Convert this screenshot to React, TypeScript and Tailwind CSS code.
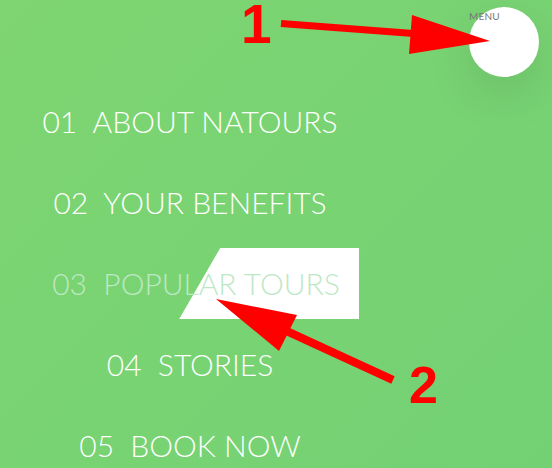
import React from 'react';

const links = [
  { num: '01', label: 'ABOUT NATOURS' },
  { num: '02', label: 'YOUR BENEFITS' },
  { num: '03', label: 'POPULAR TOURS', hover: true },
  { num: '04', label: 'STORIES' },
  { num: '05', label: 'BOOK NOW' },
];

const App: React.FC = () => {
  return (
    <div className="relative w-[552px] h-[468px] overflow-hidden bg-[linear-gradient(135deg,#7ed571,#73d174)] font-['Lato',sans-serif]">
      {/* nav */}
      <ul className="w-[380px] pt-[86px] flex flex-col items-center gap-[10px]">
        {links.map(l => (
          <li key={l.num}>
            <a
              className={`relative inline-block px-8 py-4 text-[30px] leading-[39px] font-light whitespace-pre ${
                l.hover ? 'text-[#bde8c5] translate-x-[6px]' : 'text-white'
              }`}
            >
              {l.hover && (
                <span className="absolute top-0 bottom-0 left-[159px] w-[180px] bg-white [clip-path:polygon(41px_0,100%_0,100%_100%,0_100%)]" />
              )}
              <span className="relative">{`${l.num}  ${l.label}`}</span>
            </a>
          </li>
        ))}
      </ul>

      {/* menu button */}
      <div className="absolute left-[469px] top-[7px] w-[70px] h-[70px] rounded-full bg-white shadow-[0_16px_48px_rgba(0,0,0,0.1)]" />
      <span className="absolute left-[469px] top-[10px] text-[10px] leading-[12px] text-[#777] tracking-[0.2px]">MENU</span>

      {/* annotations */}
      <svg className="absolute inset-0" width="552" height="468" viewBox="0 0 552 468">
        <line x1="281" y1="23.5" x2="420" y2="34" stroke="#ff0000" strokeWidth="7" />
        <polygon points="490,41 412,15 409,54" fill="#ff0000" />
        <line x1="393" y1="380" x2="280" y2="328" stroke="#ff0000" strokeWidth="8" />
        <polygon points="216,299 297,315 279,351" fill="#ff0000" />
      </svg>
      <span className="absolute left-[241px] top-0 text-[55px] leading-[48px] font-bold text-[#ff0000] font-['Liberation_Sans',sans-serif]">
        1
      </span>
      <span className="absolute left-[409px] top-[356px] text-[52px] leading-[58px] font-bold text-[#ff0000] font-['Liberation_Sans',sans-serif]">
        2
      </span>
    </div>
  );
};

export default App;
